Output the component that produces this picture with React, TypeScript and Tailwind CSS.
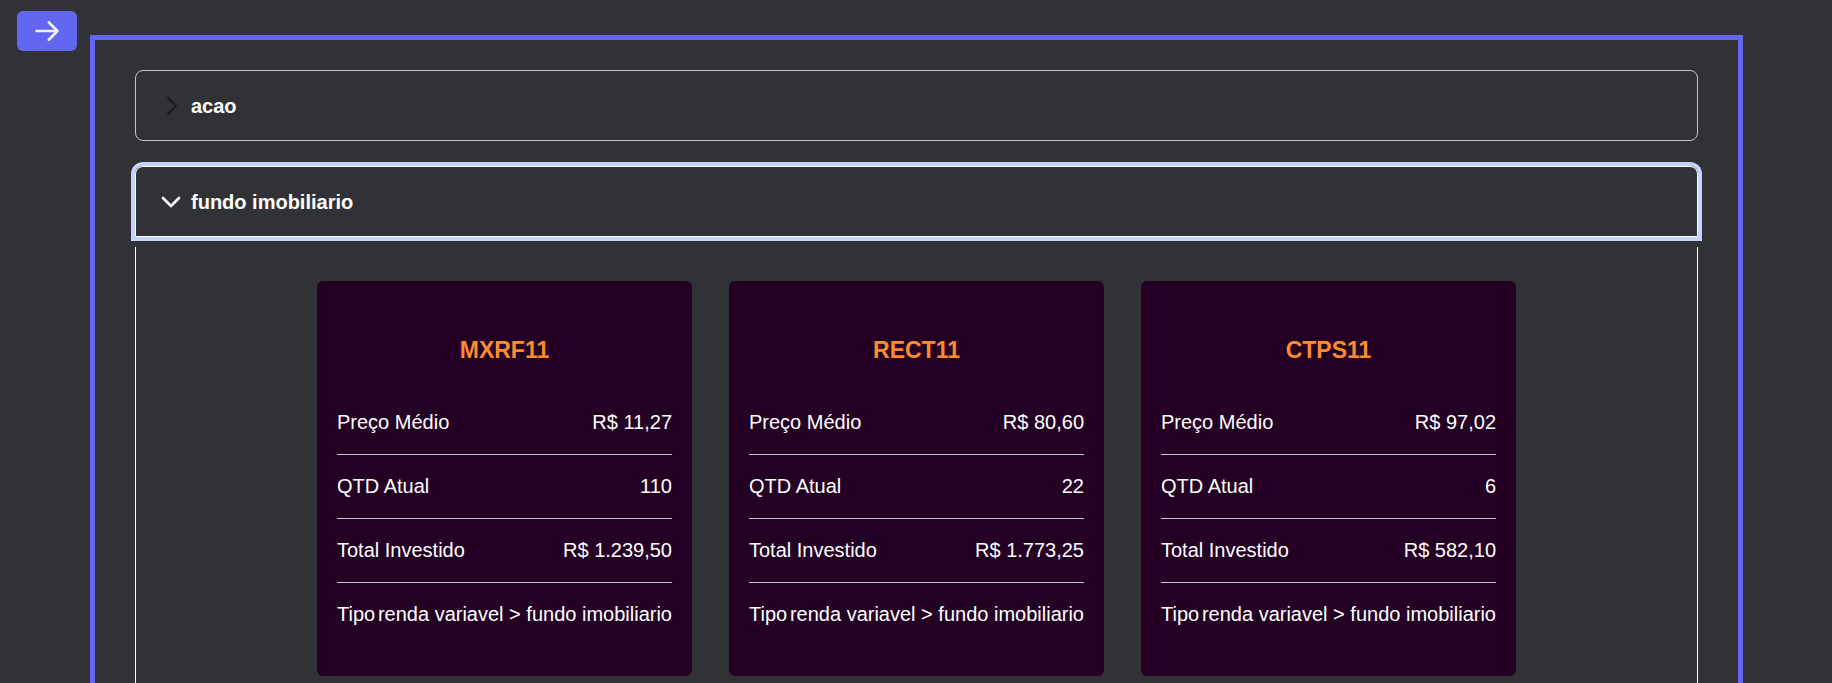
import React from "react";

interface Fundo {
  ticker: string;
  preco: string;
  qtd: string;
  total: string;
  tipo: string;
}

const fundos: Fundo[] = [
  { ticker: "MXRF11", preco: "R$ 11,27", qtd: "110", total: "R$ 1.239,50", tipo: "renda variavel > fundo imobiliario" },
  { ticker: "RECT11", preco: "R$ 80,60", qtd: "22", total: "R$ 1.773,25", tipo: "renda variavel > fundo imobiliario" },
  { ticker: "CTPS11", preco: "R$ 97,02", qtd: "6", total: "R$ 582,10", tipo: "renda variavel > fundo imobiliario" },
];

function ChevronRight() {
  return (
    <svg width="24" height="24" viewBox="0 0 24 24" fill="none" stroke="#1c1d20" strokeWidth="2.4" strokeLinecap="round" strokeLinejoin="round">
      <polyline points="9,4 17,12 9,20" />
    </svg>
  );
}

function ChevronDown() {
  return (
    <svg width="24" height="24" viewBox="0 0 24 24" fill="none" stroke="#ffffff" strokeWidth="2.6" strokeLinecap="round" strokeLinejoin="round">
      <polyline points="4,8 12,16 20,8" />
    </svg>
  );
}

function FundoCard({ fundo }: { fundo: Fundo }) {
  const rows = [
    ["Preço Médio", fundo.preco],
    ["QTD Atual", fundo.qtd],
    ["Total Investido", fundo.total],
    ["Tipo", fundo.tipo],
  ];
  return (
    <div className="w-[375px] shrink-0 rounded-md bg-[#230024] px-5 pt-[56px] pb-[30px]">
      <h2 className="text-center text-[23px] leading-[26px] font-bold text-[#fa8c2f] mb-[28px]">
        {fundo.ticker}
      </h2>
      {rows.map(([label, value], i) => (
        <div
          key={label}
          className={`flex justify-between py-5 text-xl leading-[23px] text-white ${
            i < rows.length - 1 ? "border-b border-[#cbc3cf]" : ""
          }`}
        >
          <span>{label}</span>
          <span>{value}</span>
        </div>
      ))}
    </div>
  );
}

export default function App() {
  return (
    <div className="relative min-h-screen bg-[#313236] font-['Liberation_Sans',Arial,sans-serif]">
      {/* sidebar toggle */}
      <button className="absolute left-[17px] top-[11px] flex h-10 w-[60px] items-center justify-center rounded-md bg-[#6366f1]">
        <svg width="28" height="28" viewBox="0 0 24 24" fill="none" stroke="#eef0ff" strokeWidth="2.2" strokeLinecap="round" strokeLinejoin="round">
          <path d="M13.5 4.5 21 12m0 0-7.5 7.5M21 12H3" />
        </svg>
      </button>

      <main className="pl-[90px] pr-[89px] pt-[35px]">
        <div className="border-[5px] border-[#6366f1] px-10 pt-[30px] pb-10">
          {/* acao */}
          <div className="flex h-[71px] items-center gap-2 rounded-lg border border-[#c4c4c4] pl-[23px]">
            <ChevronRight />
            <span className="text-xl font-bold text-white">acao</span>
          </div>

          {/* fundo imobiliario */}
          <div className="mt-[25px]">
            <div className="flex h-[71px] items-center gap-2 rounded-t-lg border border-white pl-[23px] ring-4 ring-[#c7d2fe]">
              <ChevronDown />
              <span className="text-xl font-bold text-white">fundo imobiliario</span>
            </div>
            <div className="mt-2.5 flex justify-center gap-[37px] border-x border-white pt-[34px] pb-10">
              {fundos.map((f) => (
                <FundoCard key={f.ticker} fundo={f} />
              ))}
            </div>
          </div>
        </div>
      </main>
    </div>
  );
}
